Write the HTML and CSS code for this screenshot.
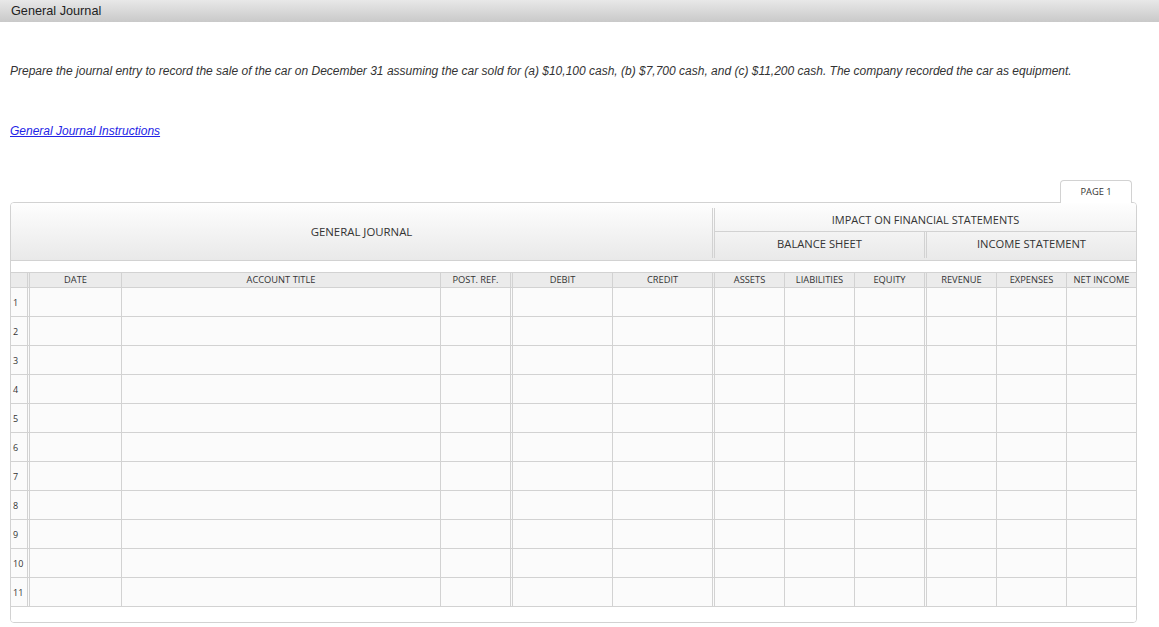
FILE: index.html
```html
<!DOCTYPE html>
<html>
<head>
<meta charset="utf-8">
<link rel="stylesheet" href="styles.css">
</head>
<body>
<div class="titlebar">General Journal</div>
<div class="content">
  <p class="prompt">Prepare the journal entry to record the sale of the car on December 31 assuming the car sold for (a) $10,100 cash, (b) $7,700 cash, and (c) $11,200 cash. The company recorded the car as equipment.</p>
  <p class="linkline"><a href="#" class="instr">General Journal Instructions</a></p>
  <div class="tabs"><div class="tab">PAGE 1</div></div>
  <div class="journal">
    <div class="jhead">
      <div class="gj">GENERAL JOURNAL</div>
      <div class="vsep"></div>
      <div class="impact">
        <div class="impact-top">IMPACT ON FINANCIAL STATEMENTS</div>
        <div class="impact-bottom">
          <div class="bs">BALANCE SHEET</div>
          <div class="vsep2"></div>
          <div class="is">INCOME STATEMENT</div>
        </div>
      </div>
    </div>
    <div class="grid">
      <div class="c h num dbl"></div><div class="c h">DATE</div><div class="c h">ACCOUNT TITLE</div><div class="c h dbl">POST. REF.</div><div class="c h">DEBIT</div><div class="c h dbl">CREDIT</div><div class="c h">ASSETS</div><div class="c h">LIABILITIES</div><div class="c h dbl">EQUITY</div><div class="c h">REVENUE</div><div class="c h">EXPENSES</div><div class="c h last">NET INCOME</div>

      <div class="c num dbl">1</div><div class="c"></div><div class="c"></div><div class="c dbl"></div><div class="c"></div><div class="c dbl"></div><div class="c"></div><div class="c"></div><div class="c dbl"></div><div class="c"></div><div class="c"></div><div class="c last"></div>
      <div class="c num dbl">2</div><div class="c"></div><div class="c"></div><div class="c dbl"></div><div class="c"></div><div class="c dbl"></div><div class="c"></div><div class="c"></div><div class="c dbl"></div><div class="c"></div><div class="c"></div><div class="c last"></div>
      <div class="c num dbl">3</div><div class="c"></div><div class="c"></div><div class="c dbl"></div><div class="c"></div><div class="c dbl"></div><div class="c"></div><div class="c"></div><div class="c dbl"></div><div class="c"></div><div class="c"></div><div class="c last"></div>
      <div class="c num dbl">4</div><div class="c"></div><div class="c"></div><div class="c dbl"></div><div class="c"></div><div class="c dbl"></div><div class="c"></div><div class="c"></div><div class="c dbl"></div><div class="c"></div><div class="c"></div><div class="c last"></div>
      <div class="c num dbl">5</div><div class="c"></div><div class="c"></div><div class="c dbl"></div><div class="c"></div><div class="c dbl"></div><div class="c"></div><div class="c"></div><div class="c dbl"></div><div class="c"></div><div class="c"></div><div class="c last"></div>
      <div class="c num dbl">6</div><div class="c"></div><div class="c"></div><div class="c dbl"></div><div class="c"></div><div class="c dbl"></div><div class="c"></div><div class="c"></div><div class="c dbl"></div><div class="c"></div><div class="c"></div><div class="c last"></div>
      <div class="c num dbl">7</div><div class="c"></div><div class="c"></div><div class="c dbl"></div><div class="c"></div><div class="c dbl"></div><div class="c"></div><div class="c"></div><div class="c dbl"></div><div class="c"></div><div class="c"></div><div class="c last"></div>
      <div class="c num dbl">8</div><div class="c"></div><div class="c"></div><div class="c dbl"></div><div class="c"></div><div class="c dbl"></div><div class="c"></div><div class="c"></div><div class="c dbl"></div><div class="c"></div><div class="c"></div><div class="c last"></div>
      <div class="c num dbl">9</div><div class="c"></div><div class="c"></div><div class="c dbl"></div><div class="c"></div><div class="c dbl"></div><div class="c"></div><div class="c"></div><div class="c dbl"></div><div class="c"></div><div class="c"></div><div class="c last"></div>
      <div class="c num dbl">10</div><div class="c"></div><div class="c"></div><div class="c dbl"></div><div class="c"></div><div class="c dbl"></div><div class="c"></div><div class="c"></div><div class="c dbl"></div><div class="c"></div><div class="c"></div><div class="c last"></div>
      <div class="c num dbl">11</div><div class="c"></div><div class="c"></div><div class="c dbl"></div><div class="c"></div><div class="c dbl"></div><div class="c"></div><div class="c"></div><div class="c dbl"></div><div class="c"></div><div class="c"></div><div class="c last"></div>
    </div>
    <div class="jfoot"></div>
  </div>
</div>
</body>
</html>
```

FILE: styles.css
```css
* { box-sizing: border-box; }
html, body { margin: 0; padding: 0; background: #fff; }
body { font-family: "Liberation Sans", Arial, sans-serif; color: #222; }

.titlebar {
  height: 22px;
  line-height: 23px;
  padding-left: 11px;
  font-size: 12.7px;
  color: #222;
  background: linear-gradient(#e8e8e8, #c9c9c9);
}

.content { padding: 0 22px 0 10px; }

.prompt {
  margin: 42px 0 0 0;
  font-size: 12px;
  line-height: 14px;
  font-style: italic;
  color: #333;
  white-space: nowrap;
}

.linkline {
  margin: 46px 0 0 0;
  font-size: 12px;
  line-height: 14px;
  font-style: italic;
}
.instr { color: #2323e6; text-decoration: underline; }

.tabs {
  display: flex;
  justify-content: flex-end;
  margin-top: 42px;
  padding-right: 5px;
}
.tab {
  width: 72px;
  height: 23px;
  margin-bottom: -1px;
  border: 1px solid #d2d2d2;
  border-bottom: none;
  border-radius: 4px 4px 0 0;
  background: #fff;
  font-family: "Open Sans", sans-serif;
  font-size: 9.3px;
  line-height: 21px;
  text-align: center;
  color: #333;
  position: relative;
  z-index: 1;
}

.journal {
  border: 1px solid #d2d2d2;
  border-radius: 4px;
  font-family: "Open Sans", sans-serif;
  color: #333;
  overflow: hidden;
}

.jhead {
  display: flex;
  height: 58px;
  border-bottom: 1px solid #d2d2d2;
  background: linear-gradient(#fefefe, #e9e9e9);
}
.gj {
  width: 701px;
  display: flex;
  align-items: center;
  justify-content: center;
  font-size: 11.4px;
  padding-bottom: 1px;
}
.vsep {
  width: 3px;
  border-left: 3px double #d2d2d2;
  margin: 5px 0 2px 0;
}
.impact { width: 421px; display: flex; flex-direction: column; }
.impact-top {
  height: 29px;
  border-bottom: 1px solid #d2d2d2;
  display: flex;
  align-items: center;
  justify-content: center;
  font-size: 11px;
  padding-top: 5px;
}
.impact-bottom { flex: 1; display: flex; }
.bs, .is {
  width: 209px;
  display: flex;
  align-items: center;
  justify-content: center;
  font-size: 11.2px;
  padding-bottom: 5px;
}
.vsep2 {
  width: 3px;
  border-left: 3px double #d2d2d2;
  margin-bottom: 2px;
}

.grid {
  margin-top: 11px;
  border-top: 1px solid #d2d2d2;
  display: grid;
  grid-template-columns: 19px 92px 319px 72px 100px 102px 70px 70px 72px 70px 70px 69px;
  grid-template-rows: 15px;
  grid-auto-rows: 29px;
}
.c {
  border-right: 1px solid #d2d2d2;
  border-bottom: 1px solid #d2d2d2;
  background: #fbfbfb;
}
.c.dbl { border-right: 3px double #d2d2d2; }
.c.last { border-right: none; }
.c.h {
  height: 15px;
  background: #ebebeb;
  font-size: 9.3px;
  line-height: 13px;
  text-align: center;
  color: #333;
}
.c.num {
  font-size: 9px;
  display: flex;
  align-items: center;
  padding-left: 2px;
  color: #333;
}

.jfoot { height: 15px; background: #fff; }
```
